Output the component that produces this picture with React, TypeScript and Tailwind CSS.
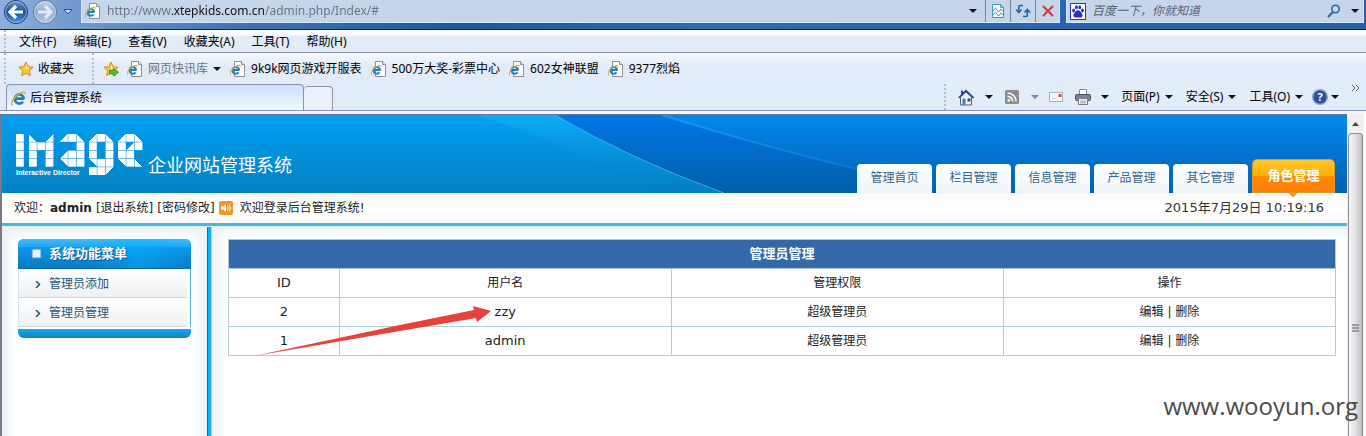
import React from "react";

interface Bookmark {
    name: string;
    muted?: boolean;
}

interface Admin {
    id: number;
    name: string;
    role: string;
}

const menus = ["文件(F)", "编辑(E)", "查看(V)", "收藏夹(A)", "工具(T)", "帮助(H)"];

const bookmarks: Bookmark[] = [
    { name: "网页快讯库", muted: true },
    { name: "9k9k网页游戏开服表" },
    { name: "500万大奖-彩票中心" },
    { name: "602女神联盟" },
    { name: "9377烈焰" },
];

const navTabs = ["管理首页", "栏目管理", "信息管理", "产品管理", "其它管理"];

const sideLinks = ["管理员添加", "管理员管理"];

const admins: Admin[] = [
    { id: 2, name: "zzy", role: "超级管理员" },
    { id: 1, name: "admin", role: "超级管理员" },
];

// "#" is a full tile, the letters are tiles with one corner cut off
const logoTiles = [
    { x: 0, rows: ["#", "#", "#", "#"] },
    { x: 13, rows: ["l.r", "###", "#.#", "#.#"] },
    { x: 44, rows: ["r#l", "..#", "r##", "t##"] },
    { x: 73, rows: ["r#l", "#.#", "#.#", "t##", "##u"] },
    { x: 102, rows: ["r#l", "#r#", "##.", "t#l"] },
];

const tileFill: Record<string, string> = {
    "#": "#fff",
    r: "url(#tile-r)",
    l: "url(#tile-l)",
    t: "url(#tile-t)",
    u: "url(#tile-u)",
};

const TileGradient = ({ id, x1, y1, x2, y2 }: { id: string; x1: number; y1: number; x2: number; y2: number }) => (
    <linearGradient id={id} x1={x1} y1={y1} x2={x2} y2={y2}>
        <stop offset="0.5" stopColor="#fff" stopOpacity="0" />
        <stop offset="0.5" stopColor="#fff" />
    </linearGradient>
);

const Logo = () => (
    <svg width="128" height="42" viewBox="0 0 128 42" role="img" aria-label="IMAGE">
        <defs>
            <TileGradient id="tile-r" x1={0} y1={0} x2={1} y2={1} />
            <TileGradient id="tile-u" x1={1} y1={1} x2={0} y2={0} />
            <TileGradient id="tile-l" x1={1} y1={0} x2={0} y2={1} />
            <TileGradient id="tile-t" x1={0} y1={1} x2={1} y2={0} />
        </defs>
        {logoTiles.map((group) =>
            group.rows.map((row, y) =>
                row.split("").map((tile, x) =>
                    tile === "." ? null : (
                        <rect
                            key={`${group.x}-${x}-${y}`}
                            x={group.x + x * 8.3}
                            y={y * 8.3}
                            width="7.8"
                            height="7.8"
                            fill={tileFill[tile]}
                        />
                    )
                )
            )
        )}
    </svg>
);

const IeMark = () => (
    <>
        <path d="M12.6 8.6H5.2M12.4 8.8A4.1 4.1 0 1 0 11.6 11.4" fill="none" stroke="#1f7fc4" strokeWidth="2.4" />
        <path d="M2.2 14.6C-.2 13 3.4 6.600 9.400 3.600 12 2.400 14 2.400 13.400 4.600" fill="none" stroke="#e3a92c" strokeWidth="1.3" />
    </>
);

const PageIcon = () => (
    <svg width="16" height="16" viewBox="0 0 16 16" className="shrink-0">
        <path d="M4.500.5h7l3 3v12h-10z" fill="#fdfdfd" stroke="#8b8f97" />
        <path d="M11.500.5v3h3" fill="#dde" stroke="#8b8f97" />
        <g transform="translate(-1 2) scale(.82)">
            <IeMark />
        </g>
    </svg>
);

const IeIcon = () => (
    <svg width="16" height="16" viewBox="0 0 16 16" className="shrink-0">
        <g transform="translate(-1 -1) scale(1.12)">
            <IeMark />
        </g>
    </svg>
);

const StarIcon = ({ add }: { add?: boolean }) => (
    <svg width="16" height="16" viewBox="0 0 16 16" className="shrink-0">
        <path
            d="M8 1l2.100 4.700 5 .5-3.700 3.500 1 5L8 12.200 3.600 14.700l1-5L.9 6.200l5-.5z"
            fill="#fdc63c"
            stroke="#d98a1c"
        />
        <path d="M8 3.200l1.200 3.300 2 .4L8 8z" fill="#fff3b0" />
        {add && <path d="M6.500 9.500h4V7.500l5 3.800-5 3.700v-2.200h-4z" fill="#54c23c" stroke="#2c7d24" strokeWidth=".8" />}
    </svg>
);

const Caret = ({ muted }: { muted?: boolean }) => (
    <svg width="8" height="4" viewBox="0 0 8 4" className="shrink-0">
        <path d="M0 0h8L4 4z" fill={muted ? "#7c8596" : "#111"} />
    </svg>
);

const Grip = () => <span className="w-0 self-stretch border-l-2 border-dotted border-[#b4bccb]" />;

const RoundArrow = ({ back }: { back?: boolean }) => (
    <svg width="26" height="26" viewBox="0 0 26 26">
        <defs>
            <linearGradient id={back ? "nav-back" : "nav-next"} x1="0" y1="0" x2="0" y2="1">
                <stop offset="0" stopColor={back ? "#6f9ad4" : "#c8d5e8"} />
                <stop offset=".5" stopColor={back ? "#1c4b9c" : "#93aaca"} />
                <stop offset="1" stopColor={back ? "#3f9fe6" : "#b5cbe6"} />
            </linearGradient>
        </defs>
        <circle cx="13" cy="13" r="11.500" fill={back ? "url(#nav-back)" : "url(#nav-next)"} stroke={back ? "#17356b" : "#5d7598"} />
        <circle cx="13" cy="13" r="10.500" fill="none" stroke="#dce8f6" strokeOpacity=".6" />
        <path
            d={back ? "M20 13H8M13 7l-6 6 6 6" : "M6 13h12M13 7l6 6-6 6"}
            fill="none"
            stroke={back ? "#fff" : "#dfe8f4"}
            strokeWidth="3.200"
        />
    </svg>
);

const AddressBar = () => (
    <div className="h-[30px] overflow-hidden border-b border-[#0b2650] bg-[linear-gradient(90deg,#8fb0da_0,#6f98cf_80px,#3f72b8_240px,#1f57a6_460px,#2f68b4_700px,#2860ae_1366px)] flex items-start">
        <div className="flex items-center w-[81px] h-[23px] pl-[3px] gap-[3px]">
            <button aria-label="后退">
                <RoundArrow back />
            </button>
            <button aria-label="前进">
                <RoundArrow />
            </button>
            <button aria-label="历史" className="pl-[2px]">
                <svg width="10" height="6" viewBox="0 0 10 6">
                    <path d="M1 .5h8L5 5z" fill="#cfe0f5" stroke="#24508f" />
                </svg>
            </button>
        </div>
        <div className="flex-1 flex h-[23px] border-x border-b border-[#dbe8f7] bg-[#c5d5ea] items-stretch">
            <span className="flex items-center pl-[3px] pr-[6px]">
                <PageIcon />
            </span>
            <input
                aria-label="地址"
                defaultValue="http://www.xtepkids.com.cn/admin.php/Index/#"
                className="flex-1 min-w-0 outline-none text-xs bg-clip-text text-transparent bg-[linear-gradient(90deg,#6a7180_65px,#111_65px,#111_157px,#6a7180_157px)]"
            />
            <button aria-label="地址列表" className="w-6 flex items-center justify-center">
                <Caret />
            </button>
            <button aria-label="兼容性视图" className="w-[25px] flex items-center justify-center border-l border-[#6583ad]">
                <svg width="14" height="16" viewBox="0 0 14 16">
                    <path d="M1.500 1.500h8l3 3v10h-11z" fill="#f4faff" stroke="#4a93b8" />
                    <path d="M9.500 1.500v3h3" fill="none" stroke="#4a93b8" />
                    <path d="M2 8l2.500-3 3 4L10 6l2 2.500M2 12l2.500-3 3 4 2.500-3 2 2" fill="none" stroke="#3aa28c" />
                </svg>
            </button>
            <button aria-label="刷新" className="w-[25px] flex items-center justify-center border-l border-[#6583ad]">
                <svg width="16" height="16" viewBox="0 0 16 16" fill="none" stroke="#1d65a8" strokeWidth="1.600">
                    <path d="M8 2.500H5Q3.800 2.500 3.800 4v5M1 6.500L3.800 9.500l2.800-3" />
                    <path d="M8 13.500h3q1.300 0 1.300-1.500V7M9.500 9.500L12.300 6.500l2.800 3" />
                </svg>
            </button>
            <button aria-label="停止" className="w-[24px] flex items-center justify-center border-l border-[#6583ad]">
                <svg width="14" height="14" viewBox="0 0 14 14">
                    <path d="M2 2l10 10M12 2L2 12" stroke="#c9403b" strokeWidth="2.200" />
                </svg>
            </button>
        </div>
        <div className="w-[298px] ml-[6px] mr-[2px] flex h-[23px] border-x border-b border-[#dbe8f7] bg-[#c5d5ea] items-center">
            <svg width="16" height="17" viewBox="0 0 16 17" className="ml-[3px] shrink-0">
                <rect x=".5" y=".5" width="15" height="16" fill="#fff" stroke="#2a35c8" />
                <g fill="#2530c4">
                    <ellipse cx="3.600" cy="7.600" rx="1.400" ry="2" />
                    <ellipse cx="6.400" cy="4.200" rx="1.400" ry="2" />
                    <ellipse cx="9.800" cy="4.200" rx="1.400" ry="2" />
                    <ellipse cx="12.500" cy="7.600" rx="1.400" ry="2" />
                    <path d="M8 7.200c2 0 4.600 3.400 4.600 5.200 0 2.400-2.800 2-4.600 2s-4.600.4-4.600-2C3.400 10.600 6 7.200 8 7.200z" />
                </g>
            </svg>
            <input
                aria-label="搜索"
                placeholder="百度一下，你就知道"
                className="flex-1 min-w-0 ml-[6px] outline-none italic text-xs placeholder:text-[#5a6270]"
            />
            <button aria-label="搜索">
                <svg width="14" height="14" viewBox="0 0 14 14" fill="none" stroke="#2b6aa8">
                    <circle cx="8.500" cy="5" r="3.700" strokeWidth="1.600" />
                    <path d="M6 8l-5 5" strokeWidth="2.200" />
                </svg>
            </button>
            <button aria-label="搜索选项" className="ml-[10px] mr-[4px]">
                <Caret />
            </button>
        </div>
    </div>
);

const MenuBar = () => (
    <div className="h-[23px] pl-[4px] flex items-stretch border-b border-[#8b93a8] bg-[linear-gradient(#fafcff_0,#fafcff_5px,#e1ecf8_6px,#e1ecf8_100%)]">
        <Grip />
        <nav className="flex items-center gap-[17px] pl-[13px] pt-px text-xs text-black">
            {menus.map((menu) => (
                <button key={menu}>{menu}</button>
            ))}
        </nav>
    </div>
);

const FavoritesBar = () => (
    <div className="h-[31px] pl-[4px] flex items-stretch bg-[linear-gradient(#f7faff,#e2ecf9_40%,#e2ecf9)] text-xs text-black">
        <Grip />
        <button className="flex items-center gap-[4px] pl-[12px] pr-[18px]">
            <StarIcon />
            收藏夹
        </button>
        <Grip />
        <button aria-label="添加到收藏夹栏" className="pl-[9px]">
            <StarIcon add />
        </button>
        <div className="flex items-center gap-[9px] pl-[8px]">
            {bookmarks.map((item) => (
                <a key={item.name} href="#" className={`flex items-center gap-[5px] whitespace-nowrap ${item.muted ? "text-[#6d7482]" : ""}`}>
                    <PageIcon />
                    {item.name}
                    {item.muted && <Caret />}
                </a>
            ))}
        </div>
    </div>
);

const HomeIcon = () => (
    <svg width="17" height="17" viewBox="0 0 17 17">
        <path d="M2.500 8v8h11V8L8 3z" fill="#eef3fa" stroke="#56617a" />
        <path d="M.8 8.800L8 1.800l7.600 7" fill="none" stroke="#2f4b8d" strokeWidth="1.800" />
        <path d="M3 1.500h2v4H3z" fill="#2f4b8d" />
        <path d="M4.500 9.500h3v6.500h-3z" fill="#3d7fb8" />
        <path d="M9.500 9.500h3v3h-3z" fill="#2f4b8d" />
    </svg>
);

const FeedIcon = () => (
    <svg width="14" height="14" viewBox="0 0 14 14">
        <rect width="14" height="14" rx="1.500" fill="#8c8c8c" />
        <circle cx="3.800" cy="10.400" r="1.400" fill="#fff" />
        <path d="M2.500 6.400a5.200 5.200 0 0 1 5.200 5.200M2.500 3a8.600 8.600 0 0 1 8.600 8.600" fill="none" stroke="#fff" strokeWidth="1.600" />
    </svg>
);

const MailIcon = () => (
    <svg width="14" height="10" viewBox="0 0 14 10">
        <rect x=".5" y=".5" width="13" height="9" fill="#fbfbfd" stroke="#a9afba" />
        <path d="M9.500 2h3v3h-3z" fill="#d6453c" />
        <path d="M3 6.500h4" stroke="#c9ced8" />
    </svg>
);

const PrintIcon = () => (
    <svg width="16" height="16" viewBox="0 0 16 16">
        <path d="M4.500.5h7v6h-7z" fill="#fff" stroke="#8a8f99" />
        <rect x=".5" y="5.500" width="15" height="6" rx="1" fill="#7c828d" stroke="#4d525c" />
        <path d="M3.500 9.500h9v6h-9z" fill="#f4f4f4" stroke="#777c86" />
        <path d="M5 12h6M5 13.800h6" stroke="#9aa0ab" />
    </svg>
);

const CommandBar = () => (
    <div className="flex items-center pr-[6px] h-full text-xs text-black whitespace-nowrap">
        <Grip />
        <button aria-label="主页" className="pl-[12px]">
            <HomeIcon />
        </button>
        <button aria-label="主页选项" className="pl-[10px]">
            <Caret />
        </button>
        <button aria-label="源" className="pl-[12px]">
            <FeedIcon />
        </button>
        <button aria-label="源选项" className="pl-[12px]">
            <Caret muted />
        </button>
        <button aria-label="邮件" className="pl-[10px]">
            <MailIcon />
        </button>
        <button aria-label="打印" className="pl-[12px]">
            <PrintIcon />
        </button>
        <button aria-label="打印选项" className="pl-[10px] pr-[12px]">
            <Caret />
        </button>
        <div className="flex gap-[13px]">
            {["页面(P)", "安全(S)", "工具(O)"].map((name) => (
                <button key={name} className="flex items-center gap-[5px]">
                    {name}
                    <Caret />
                </button>
            ))}
        </div>
        <button aria-label="帮助" className="flex items-center gap-[3px] pl-[9px]">
            <svg width="16" height="16" viewBox="0 0 16 16">
                <circle cx="8" cy="8" r="7.300" fill="#2c4f9e" stroke="#8fa1c4" strokeWidth="1.400" />
                <text x="8" y="12" textAnchor="middle" fontSize="11" fontWeight="bold" fill="#fff">
                    ?
                </text>
            </svg>
            <Caret />
        </button>
        <button aria-label="更多" className="self-start pl-[12px]">
            <svg width="9" height="8" viewBox="0 0 9 8">
                <path d="M1 1l3 3-3 3M5 1l3 3-3 3" fill="none" stroke="#4a5b80" />
            </svg>
        </button>
    </div>
);

const TabBar = () => (
    <div className="h-[27px] pl-[6px] flex items-end justify-between border-b border-[#8b93b5] bg-[#e2ecf9]">
        <div className="flex items-end">
            <button className="w-[298px] h-[26px] flex items-center gap-[3px] pl-[4px] text-xs text-black rounded-t-sm border border-b-0 border-[#8b93a8] bg-gradient-to-b from-[#c9dffa] to-[#f3f8fe]">
                <IeIcon />
                后台管理系统
            </button>
            <button aria-label="新选项卡" className="w-[29px] h-[24px] border border-l-0 border-b-0 border-[#8b93a8] rounded-t-sm bg-[#eaf1fb]" />
        </div>
        <CommandBar />
    </div>
);

const HeaderArt = () => (
    <svg className="absolute inset-0 w-full h-full" viewBox="0 0 1345 78" preserveAspectRatio="none">
        <defs>
            <linearGradient id="art-left" x1="0" y1="0" x2="0" y2="1">
                <stop offset="0" stopColor="#029ff2" />
                <stop offset="1" stopColor="#0281c2" />
            </linearGradient>
            <linearGradient id="art-mid" x1="0" y1="0" x2="0" y2="1">
                <stop offset="0" stopColor="#0076e6" />
                <stop offset="1" stopColor="#005fa8" />
            </linearGradient>
            <linearGradient id="art-right" x1="0" y1="0" x2="0" y2="1">
                <stop offset="0" stopColor="#0088ee" />
                <stop offset="1" stopColor="#0062ac" />
            </linearGradient>
            <linearGradient id="art-glow" x1="0" y1="0" x2="0" y2="1">
                <stop offset="0" stopColor="#10b2fa" stopOpacity=".7" />
                <stop offset="1" stopColor="#0078bd" stopOpacity=".2" />
            </linearGradient>
            <linearGradient id="art-edge" x1="0" y1="0" x2="1" y2="0">
                <stop offset="0" stopColor="#2ba0f8" stopOpacity=".7" />
                <stop offset="1" stopColor="#2ba0f8" stopOpacity="0" />
            </linearGradient>
        </defs>
        <path d="M0 0h1345v78H0z" fill="url(#art-left)" />
        <path d="M475 0h78Q630 45 722 78h-70Q570 30 475 0z" fill="url(#art-glow)" />
        <path d="M553 0h792v78H722Q630 45 553 0z" fill="url(#art-mid)" />
        <path d="M660 0h685v78H960Q800 44 660 0z" fill="url(#art-right)" />
        <path d="M553 0Q630 45 722 78" fill="none" stroke="#4dbcf5" strokeOpacity=".8" />
        <path d="M660 0Q800 44 960 78" fill="none" stroke="url(#art-edge)" strokeWidth="2" />
    </svg>
);

const Header = () => (
    <header className="relative h-[78px] flex justify-between">
        <HeaderArt />
        <div className="relative flex items-start pl-[14px] pt-[19px]">
            <div>
                <div className="h-[34px]">
                    <Logo />
                </div>
                <p className="text-[7px] leading-[10px] font-bold text-white font-['Liberation_Sans',sans-serif]">Interactive Director</p>
            </div>
            <h1 className="pl-[4px] pt-[19px] text-lg leading-[26px] text-white">企业网站管理系统</h1>
        </div>
        <nav className="relative flex items-end gap-[4px] pr-[12px]">
            {navTabs.map((tab) => (
                <a
                    key={tab}
                    href="#"
                    className="w-[75px] h-[29px] pt-[4px] text-center leading-5 text-[#336688] rounded-t-[4px] bg-gradient-to-b from-white to-[#eef5f8]"
                >
                    {tab}
                </a>
            ))}
            <a
                href="#"
                className="relative w-[83px] h-[34px] pt-[6px] text-center text-[13px] leading-5 font-bold text-white rounded-t-[5px] border border-[#e9952a] bg-[linear-gradient(#ffc62e_0,#ffb000_50%,#ff8a00_51%,#ff7d0a_100%)]"
            >
                角色管理
                <svg width="10" height="6" viewBox="0 0 10 6" className="absolute left-[35px] top-[32px]">
                    <path d="M0 0l5 5 5-5z" fill="#ff9a14" stroke="#d07a10" strokeWidth=".6" />
                </svg>
            </a>
        </nav>
    </header>
);

const StatusBar = () => (
    <div className="h-[30px] pl-[12px] pr-[23px] flex items-center justify-between bg-gradient-to-b from-[#fafaf8] via-white to-[#f8f8f6] text-[#222]">
        <div className="flex items-center gap-[4px]">
            <span>
                欢迎：<b>admin</b>
            </span>
            <a href="#">[退出系统]</a>
            <a href="#">[密码修改]</a>
            <svg width="14" height="14" viewBox="0 0 14 14">
                <rect width="14" height="14" rx="2" fill="#f0962c" />
                <path d="M2 5.500h2L7 3v8L4 8.500H2z" fill="#fff" />
                <path d="M8.500 5q1.500 2 0 4M10 3.500q3 3.500 0 7" fill="none" stroke="#fff" />
            </svg>
            <span className="pl-[3px]">欢迎登录后台管理系统!</span>
        </div>
        <span className="text-[13px] text-[#333]">2015年7月29日 10:19:16</span>
    </div>
);

const Sidebar = () => (
    <aside className="w-[205px] shrink-0 pl-4 pt-[12px] bg-[linear-gradient(#edf1f5,transparent_14px),linear-gradient(90deg,#edf1f5,white_14px,white_190px,#edf1f5)]">
        <div className="w-[173px]">
            <h2 className="h-[30px] pl-[13px] flex items-center gap-[7px] rounded-t-[5px] text-[13px] font-bold text-white bg-[linear-gradient(90deg,transparent_40%,#00b4ff80_70%,transparent),linear-gradient(#3fbcfb,#20a4f2_28%,#0d97ea_29%,#0b78c2)] border-b border-[#0a6cae] [text-shadow:1px_1px_1px_#075a94]">
                <svg width="11" height="11" viewBox="0 0 11 11">
                    <rect width="11" height="11" rx="2" fill="#2d8fd4" />
                    <rect x="1.500" y="1.500" width="8" height="8" fill="#e6f5ff" />
                </svg>
                系统功能菜单
            </h2>
            <ul className="border-x border-[#d5e4ec] border-r-[#5aa5cf]">
                {sideLinks.map((link) => (
                    <li key={link} className="h-[29px] mr-[3px] border-b border-[#c8dae2] bg-gradient-to-b from-white to-[#eef1f3]">
                        <a href="#" className="h-full flex items-center gap-[8px] pl-4 pt-[2px] text-[#1d5573]">
                            <svg width="6" height="7" viewBox="0 0 6 7">
                                <path d="M1 0l3.500 3.500L1 7" fill="none" stroke="#1d5573" strokeWidth="1.500" />
                            </svg>
                            {link}
                        </a>
                    </li>
                ))}
            </ul>
            <div className="mt-[2px] h-[9px] rounded-b-[6px] bg-gradient-to-b from-[#1ba7ee] to-[#0c84c6]" />
        </div>
    </aside>
);

const AdminTable = () => (
    <table className="w-full table-fixed border-collapse text-center text-[#222]">
        <colgroup>
            <col className="w-1/10" />
            <col className="w-3/10" />
            <col className="w-3/10" />
            <col className="w-3/10" />
        </colgroup>
        <thead>
            <tr className="h-[29px] bg-[#3568a8] text-white">
                <th colSpan={4} className="border border-[#a9c8da] text-[13px]">
                    管理员管理
                </th>
            </tr>
            <tr className="h-[29px]">
                <th className="border border-[#b0ced9] text-[13px] font-normal">ID</th>
                {["用户名", "管理权限", "操作"].map((head) => (
                    <th key={head} className="border border-[#b0ced9] font-normal">
                        {head}
                    </th>
                ))}
            </tr>
        </thead>
        <tbody>
            {admins.map((admin) => (
                <tr key={admin.id} className="h-[29px]">
                    <td className="border border-[#b0ced9] text-[13px]">{admin.id}</td>
                    <td className="border border-[#b0ced9] text-[13px]">{admin.name}</td>
                    <td className="border border-[#b0ced9]">{admin.role}</td>
                    <td className="border border-[#b0ced9]">
                        <a href="#">编辑</a> | <a href="#">删除</a>
                    </td>
                </tr>
            ))}
        </tbody>
    </table>
);

const ScrollBar = () => (
    <div className="w-[17px] shrink-0 mr-[2px] flex flex-col bg-[#f0f0f0]">
        <button aria-label="向上滚动" className="h-[19px] flex items-center justify-center">
            <svg width="7" height="4" viewBox="0 0 7 4">
                <path d="M0 4h7L3.500 0z" fill="#444" />
            </svg>
        </button>
        <div className="flex-1 mx-px flex justify-center pt-[190px] border border-b-0 border-[#8e8e96] rounded-t-sm bg-gradient-to-r from-[#f5f5f5] via-[#e2e2e5] to-[#bcbcc2]">
            <svg width="7" height="8" viewBox="0 0 7 8">
                <path d="M0 1h7M0 4h7M0 7h7" stroke="#55555c" />
            </svg>
        </div>
    </div>
);

const App: React.FC = () => {
    return (
        <div className="relative min-h-screen flex flex-col overflow-hidden bg-white font-['Noto_Sans','Noto_Sans_CJK_SC',sans-serif]">
            <AddressBar />
            <MenuBar />
            <FavoritesBar />
            <TabBar />
            <div className="h-[3px] bg-[#f3f5fa]" />
            <div className="flex-1 flex border-l-2 border-[#7a7a86]">
                <main className="flex-1 min-w-0 flex flex-col border-t border-[#6e7590] text-xs font-['DejaVu_Sans','Noto_Sans_CJK_SC',sans-serif]">
                    <Header />
                    <StatusBar />
                    <div className="h-[4px] border-b border-[#d5f3fa] bg-[#49b8d0]" />
                    <div className="flex-1 flex">
                        <Sidebar />
                        <div className="w-[5px] shrink-0 border-l border-r border-l-[#1b6f94] border-r-[#8fdcf5] bg-[#0cb4ee]" />
                        <section className="relative flex-1 min-w-0 pl-4 pr-[11px] pt-[12px] bg-[linear-gradient(#edf3f6,transparent_12px),linear-gradient(90deg,#edf1f5,white_14px)]">
                            <AdminTable />
                            <svg width="240" height="54" viewBox="0 0 240 54" className="absolute left-[40px] top-[78px]">
                                <path d="M2 51L148 20 222 5 221 1l18 5-14 11-1-4-76 13z" fill="#e8403a" />
                            </svg>
                        </section>
                    </div>
                </main>
                <ScrollBar />
            </div>
            <span className="absolute right-[8px] bottom-[14px] text-2xl text-[#4a4a4a] font-['Open_Sans',sans-serif]">www.wooyun.org</span>
        </div>
    );
};

export default App;
